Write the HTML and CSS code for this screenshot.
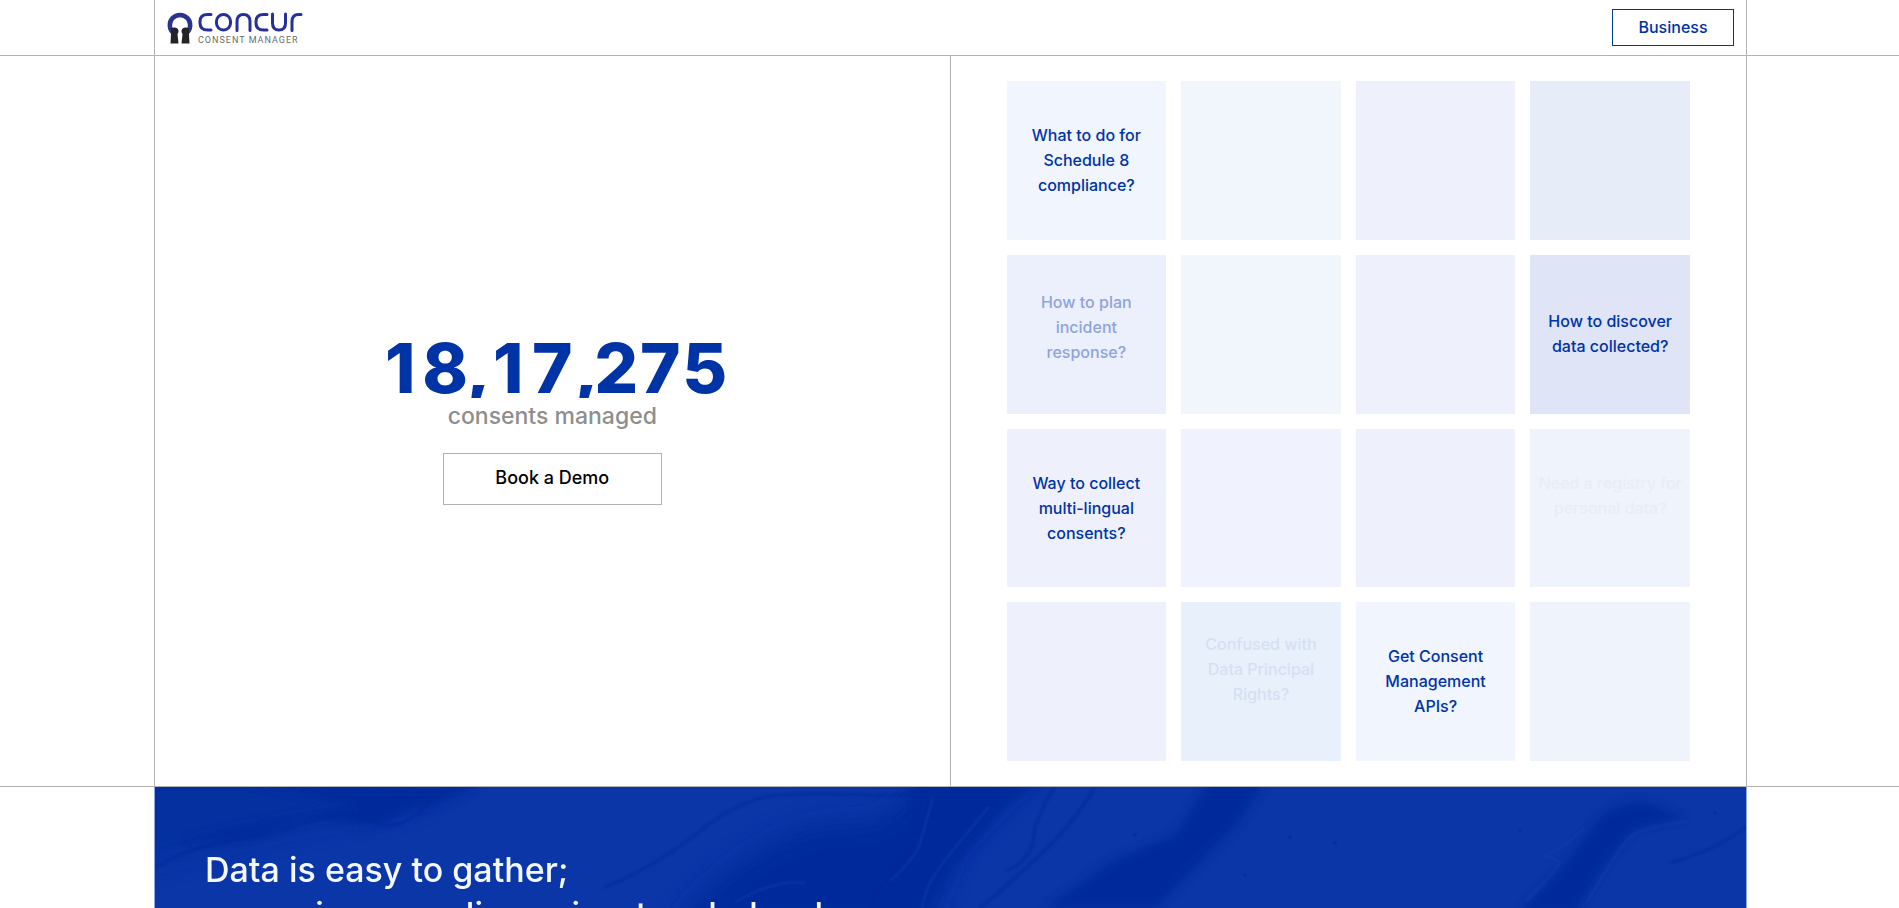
FILE: index.html
```html
<!DOCTYPE html>
<html lang="en">
<head>
<meta charset="utf-8">
<title>Concur Consent Manager</title>
<link rel="stylesheet" href="styles.css">
</head>
<body>
<header class="band">
  <div class="frame header">
    <a class="logo" href="#" aria-label="Concur Consent Manager">
      <svg class="logo-mark" viewBox="0 0 26 32" aria-hidden="true">
        <path fill="none" stroke="#2a3490" stroke-width="4.500" d="M6.500 21A10.200 10.200 0 1 1 19.500 21"/>
        <path fill="#232328" d="M4 16.500Q6 15 8 15.500Q11.500 16 11.500 19Q11.500 21 10.500 22L11.500 31.500H3.500L4 22z"/>
        <path fill="#232328" d="M22 16.500Q20 15 18 15.500Q14.500 16 14.500 19Q14.500 21 15.500 22L14.500 31.500H22.500L22 22z"/>
      </svg>
      <svg class="logo-word" viewBox="0 0 105 32" aria-hidden="true">
        <g fill="none" stroke="#27309a" stroke-width="3" stroke-linecap="round" stroke-linejoin="round">
          <path d="M13 2.500H9.500Q2 2.500 2 9.500v1.500Q2 18 9.500 18H13"/>
          <rect x="18.500" y="2.500" width="14" height="15.500" rx="6.800"/>
          <path d="M39 18.500V9.500Q39 2.500 45.500 2.500T52 9.500v9"/>
          <path d="M69 2.500H65.500Q58 2.500 58 9.500v1.500Q58 18 65.500 18H69"/>
          <path d="M74.500 2v9Q74.500 18 81 18T87.500 11V2"/>
          <path d="M94 18.500V9.500Q94 2.500 100.500 2.500H103"/>
        </g>
        <text class="logo-tag" x="0" y="31">CONSENT MANAGER</text>
      </svg>
    </a>
    <button class="business" type="button">Business</button>
  </div>
</header>
<main>
  <section class="band">
    <div class="frame hero">
      <div class="intro">
        <div class="count"><span class="digit">1</span><span class="digit">8</span><span class="comma">,</span><span class="digit">1</span><span class="digit">7</span><span class="comma">,</span><span class="digit">2</span><span class="digit">7</span><span class="digit">5</span></div>
        <p class="caption">consents managed</p>
        <button class="demo" type="button">Book a Demo</button>
      </div>
      <div class="tiles">
        <div class="tile ice">What to do for Schedule 8 compliance?</div>
        <div class="tile sky"></div>
        <div class="tile lilac"></div>
        <div class="tile steel"></div>
        <div class="tile peri rising"><span class="half">How to plan incident response?</span></div>
        <div class="tile sky"></div>
        <div class="tile lilac"></div>
        <div class="tile deep">How to discover data collected?</div>
        <div class="tile lilac">Way to collect multi-lingual consents?</div>
        <div class="tile frost"></div>
        <div class="tile lilac"></div>
        <div class="tile mist leaving tight"><span class="ghost">Need a registry for personal data?</span></div>
        <div class="tile lilac"></div>
        <div class="tile azure leaving"><span class="faint">Confused with Data Principal Rights?</span></div>
        <div class="tile ice">Get Consent Management APIs?</div>
        <div class="tile mist"></div>
      </div>
    </div>
  </section>
  <section class="frame story">
    <svg class="marble" viewBox="0 0 1591 121" preserveAspectRatio="xMidYMin slice" aria-hidden="true">
      <defs>
        <filter id="soft" x="-10%" y="-30%" width="120%" height="160%"><feGaussianBlur stdDeviation="4"/></filter>
        <filter id="wide" x="-10%" y="-30%" width="120%" height="160%"><feGaussianBlur stdDeviation="12"/></filter>
        <filter id="fine" x="-10%" y="-30%" width="120%" height="160%"><feGaussianBlur stdDeviation="1"/></filter>
      </defs>
      <g fill="#002b9b" filter="url(#wide)">
        <path opacity=".6" d="M-20 -20H320L250 20L120 44L-20 80z"/>
        <path d="M520 140Q590 50 680 36Q745 45 765 -20H880L800 60L770 140z"/>
      </g>
      <g fill="#002b9b" filter="url(#soft)">
        <path d="M90 0H318Q280 20 250 24Q235 38 210 38Q190 36 165 30Q135 34 100 50Q60 54 30 54Q110 30 200 22Q140 0 90 0z"/>
        <path d="M760 10L790 0H880L850 20L800 80L770 121H720L765 60z"/>
        <path d="M1054 -5H1110L1080 40L1000 121H890L960 72L1020 48z"/>
        <path d="M1365 125L1415 70L1445 30Q1475 8 1500 18L1530 32Q1500 36 1480 42Q1460 60 1420 125z"/>
      </g>
      <g fill="none" stroke="#002b9b" stroke-width="2" filter="url(#fine)" opacity=".8">
        <path d="M0 80Q40 58 80 54Q120 48 155 34T215 34T270 20T320 0"/>
        <path d="M450 100Q500 80 545 44T630 8Q680 5 730 9L770 6"/>
        <path d="M900 0Q880 30 878 52T850 84M940 0Q920 35 885 68T825 121"/>
        <path d="M1515 76Q1560 64 1591 40"/>
      </g>
      <g fill="none" stroke="#1640ae" stroke-width="2" filter="url(#fine)" opacity=".55">
        <path d="M834 20Q800 60 785 80T767 121M778 10Q770 40 765 56T735 94"/>
        <path d="M1535 34Q1490 38 1472 52Q1455 76 1432 115M1370 115Q1402 84 1404 76Q1402 70 1388 70Q1410 60 1430 40"/>
        <path d="M580 115Q620 92 650 96"/>
      </g>
      <g fill="#04289a" opacity=".5">
        <circle cx="1135" cy="50" r="2"/><circle cx="1180" cy="56" r="2"/><circle cx="1365" cy="44" r="2"/><circle cx="1560" cy="26" r="2"/><circle cx="980" cy="48" r="2"/><circle cx="997" cy="26" r="1"/><circle cx="1090" cy="88" r="2"/><circle cx="1138" cy="74" r="1"/>
      </g>
    </svg>
    <h1 class="headline">Data is easy to gather;<br>managing compliance is a tangled web.</h1>
  </section>
</main>
</body>
</html>
```

FILE: styles.css
```css
* { box-sizing: border-box; }
body {
  margin: 0;
  height: 100vh;
  overflow: hidden;
  display: flex;
  flex-direction: column;
  font-family: Inter, "Liberation Sans", sans-serif;
  font-weight: 500;
  color: #0033a5;
  background: #fff;
}
main { flex: 1; display: flex; flex-direction: column; min-height: 0; }
.band { border-bottom: 1px solid #b3b3b3; }
.frame {
  margin: 0 152px 0 154px;
  border: solid #b3b3b3;
  border-width: 0 1px;
}
.header {
  display: flex;
  align-items: center;
  justify-content: space-between;
  padding: 9px 12px;
}
.logo { display: flex; gap: 5px; }
.logo-mark { width: 26px; height: 32px; }
.logo-word { width: 105px; height: 32px; }
.logo-tag { font: 400 9px Roboto, sans-serif; letter-spacing: 1px; fill: #6c6c6c; }
.business {
  width: 122px;
  height: 37px;
  padding: 0 0 2px;
  font: inherit;
  font-size: 16px;
  color: #0033a5;
  background: #fff;
  border: 1px solid #003a8c;
}
.hero { display: grid; grid-template-columns: 1fr 1fr; }
.intro {
  display: flex;
  flex-direction: column;
  align-items: center;
  justify-content: center;
  border-right: 1px solid #b3b3b3;
}
.count {
  display: flex;
  font-size: 69px;
  font-weight: 800;
  line-height: 60px;
  text-align: center;
  overflow: hidden;
}
.digit { width: 44px; }
.comma { width: 20px; }
.caption { margin: 0; font-size: 23px; line-height: 36px; color: #8e8e8e; }
.demo {
  width: 219px;
  height: 52px;
  margin-top: 19px;
  padding: 0 0 2px;
  font: inherit;
  font-size: 18px;
  color: #000;
  background: #fff;
  border: 1px solid #b3b3b3;
}
.tiles {
  display: grid;
  grid-template-columns: repeat(4, 1fr);
  gap: 15px;
  padding: 25px 56px;
}
.tile {
  aspect-ratio: 200 / 199;
  display: flex;
  align-items: center;
  justify-content: center;
  padding: 0 16px;
  font-size: 16px;
  line-height: 25px;
  text-align: center;
}
.rising { padding-bottom: 14px; }
.leaving { padding-bottom: 24px; }
.tight { padding-left: 8px; padding-right: 8px; }
.ice { background: #f1f5fe; }
.frost { background: #f0f3fe; }
.sky { background: #f1f6fd; }
.lilac { background: #eef1fc; }
.steel { background: #e6edf9; }
.peri { background: #ebf0fc; }
.deep { background: #dfe4f7; }
.mist { background: #eff3fb; }
.azure { background: #e8f0fc; }
.half { color: #8fa3dc; }
.faint { color: #d5e0f2; }
.ghost { color: #e9edf8; }
.story {
  flex: 1;
  position: relative;
  min-height: 0;
  overflow: hidden;
  padding: 60px 50px;
  background: #0a36a8;
  border-color: #8fa6dc;
}
.marble { position: absolute; inset: 0; width: 100%; height: 100%; }
.headline {
  position: relative;
  margin: 0;
  font-size: 34px;
  font-weight: 500;
  line-height: 45px;
  color: #f4f7ff;
}
```
